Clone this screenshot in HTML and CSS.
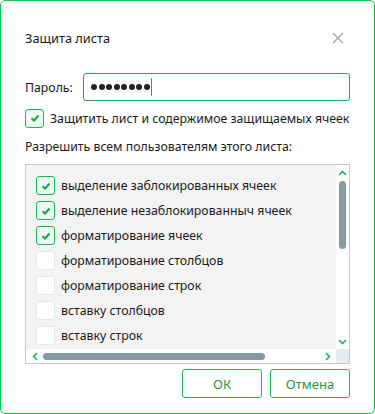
FILE: index.html
```html
<!DOCTYPE html>
<html lang="ru">
<head>
    <meta charset="UTF-8">
    <meta name="viewport" content="width=device-width, initial-scale=1.0">
    <title>Защита листа</title>
    <link rel="stylesheet" href="styles.css">
</head>
<body>
    <div class="dialog">
        <div class="dialog-header">
            <span class="dialog-title">Защита листа</span>
            <button class="close-btn" type="button" aria-label="Закрыть">
                <svg width="12" height="12" viewBox="0 0 12 12">
                    <path d="M1 1L11 11M11 1L1 11" stroke="#9aa7b2" stroke-width="1.3" fill="none"/>
                </svg>
            </button>
        </div>

        <div class="password-row">
            <label for="pwd">Пароль:</label>
            <div class="password-box">
                <span class="dot"></span><span class="dot"></span><span class="dot"></span><span class="dot"></span><span class="dot"></span><span class="dot"></span><span class="dot"></span><span class="dot"></span><span class="caret"></span>
            </div>
        </div>

        <label class="check-row">
            <span class="checkbox checked">
                <svg width="10" height="8" viewBox="0 0 10 8"><path d="M1.5 4.2L4 6.5L8.5 1.5" stroke="#15a34a" stroke-width="2" fill="none"/></svg>
            </span>
            <span>Защитить лист и содержимое защищаемых ячеек</span>
        </label>

        <div class="allow-label">Разрешить всем пользователям этого листа:</div>

        <div class="list-box">
            <div class="list-main">
                <ul class="list-items">
                    <li><span class="checkbox checked"><svg width="10" height="8" viewBox="0 0 10 8"><path d="M1.5 4.2L4 6.5L8.5 1.5" stroke="#15a34a" stroke-width="2" fill="none"/></svg></span>выделение заблокированных ячеек</li>
                    <li><span class="checkbox checked"><svg width="10" height="8" viewBox="0 0 10 8"><path d="M1.5 4.2L4 6.5L8.5 1.5" stroke="#15a34a" stroke-width="2" fill="none"/></svg></span>выделение незаблокированныч ячеек</li>
                    <li><span class="checkbox checked"><svg width="10" height="8" viewBox="0 0 10 8"><path d="M1.5 4.2L4 6.5L8.5 1.5" stroke="#15a34a" stroke-width="2" fill="none"/></svg></span>форматирование ячеек</li>
                    <li><span class="checkbox"></span>форматирование столбцов</li>
                    <li><span class="checkbox"></span>форматирование строк</li>
                    <li><span class="checkbox"></span>вставку столбцов</li>
                    <li><span class="checkbox"></span>вставку строк</li>
                </ul>
                <div class="vscroll">
                    <svg width="9" height="6" viewBox="0 0 9 6"><path d="M1 5L4.5 1.5L8 5" stroke="#19b955" stroke-width="1.6" fill="none"/></svg>
                    <div class="vthumb"></div>
                    <svg class="arrow-down" width="9" height="6" viewBox="0 0 9 6"><path d="M1 1L4.5 4.5L8 1" stroke="#19b955" stroke-width="1.6" fill="none"/></svg>
                </div>
            </div>
            <div class="hscroll">
                <div class="hbar">
                    <svg width="6" height="9" viewBox="0 0 6 9"><path d="M5 1L1.5 4.5L5 8" stroke="#19b955" stroke-width="1.6" fill="none"/></svg>
                    <div class="hthumb"></div>
                    <svg class="arrow-right" width="6" height="9" viewBox="0 0 6 9"><path d="M1 1L4.5 4.5L1 8" stroke="#19b955" stroke-width="1.6" fill="none"/></svg>
                </div>
                <div class="corner"></div>
            </div>
        </div>

        <div class="buttons">
            <button type="button" class="btn">ОК</button>
            <button type="button" class="btn">Отмена</button>
        </div>
    </div>
</body>
</html>
```

FILE: styles.css
```css
body {
    margin: 0;
    font-family: "Noto Sans", "Open Sans", sans-serif;
    font-size: 12.3px;
    color: #1a1a1a;
    background: #fff;
}
.dialog {
    width: 375px;
    height: 414px;
    box-sizing: border-box;
    border: 1px solid #12c24c;
    border-radius: 5px;
    padding: 0 24px 0 24px;
}
.dialog-header {
    display: flex;
    justify-content: space-between;
    align-items: center;
    height: 28px;
    margin-top: 23px;
}
.dialog-title {
    font-size: 12.8px;
}
.close-btn {
    border: none;
    background: none;
    padding: 0;
    margin-right: 6px;
    width: 12px;
    height: 12px;
    display: flex;
}
.password-row {
    display: flex;
    align-items: center;
    margin-top: 21px;
}
.password-row label {
    width: 58px;
}
.password-box {
    flex: 1;
    height: 28px;
    box-sizing: border-box;
    border: 1px solid #16a950;
    border-radius: 3px;
    display: flex;
    align-items: center;
    gap: 1.5px;
    padding-left: 7px;
}
.dot {
    width: 6px;
    height: 6px;
    border-radius: 50%;
    background: #222;
}
.caret {
    width: 1px;
    height: 18px;
    background: #777;
}
.check-row {
    display: flex;
    align-items: center;
    gap: 6px;
    margin-top: 7px;
    height: 20px;
}
.checkbox {
    width: 19px;
    height: 19px;
    box-sizing: border-box;
    border: 1px solid #e4e6e8;
    border-radius: 3px;
    background: #fff;
    display: inline-flex;
    align-items: center;
    justify-content: center;
    flex: none;
}
.checkbox.checked {
    border-color: #19b955;
    background: #eefbf2;
}
.allow-label {
    margin-top: 9px;
    height: 20px;
    line-height: 20px;
}
.list-box {
    margin-top: 7px;
    height: 200px;
    box-sizing: border-box;
    border: 1px solid #c8c8c8;
    display: flex;
    flex-direction: column;
}
.list-main {
    flex: 1;
    display: flex;
    min-height: 0;
}
.list-items {
    flex: 1;
    list-style: none;
    margin: 0;
    padding: 8px 0 0 10px;
    background: #f3f3f3;
}
.list-items li {
    display: flex;
    align-items: center;
    gap: 6px;
    height: 25px;
    white-space: nowrap;
}
.vscroll {
    width: 13px;
    background: #fff;
    display: flex;
    flex-direction: column;
    align-items: center;
    padding-top: 5px;
}
.vthumb {
    width: 7px;
    height: 68px;
    border-radius: 4px;
    background: #8699a7;
    margin-top: 5px;
}
.arrow-down {
    margin-top: auto;
    margin-bottom: 4px;
}
.hscroll {
    height: 14px;
    display: flex;
}
.hbar {
    flex: 1;
    background: #fff;
    display: flex;
    align-items: center;
    padding: 0 5px 0 6px;
}
.hthumb {
    width: 222px;
    height: 7px;
    border-radius: 4px;
    background: #8699a7;
    margin-left: 5px;
}
.arrow-right {
    margin-left: auto;
}
.corner {
    width: 13px;
    background: #e8ecef;
}
.buttons {
    display: flex;
    justify-content: flex-end;
    gap: 8px;
    margin-top: 5px;
}
.btn {
    width: 80px;
    height: 29px;
    box-sizing: border-box;
    border: 1px solid #19b955;
    border-radius: 3px;
    background: #fff;
    color: #139a45;
    font-family: "Noto Sans", "Open Sans", sans-serif;
    font-size: 13px;
    padding: 0;
}
```
